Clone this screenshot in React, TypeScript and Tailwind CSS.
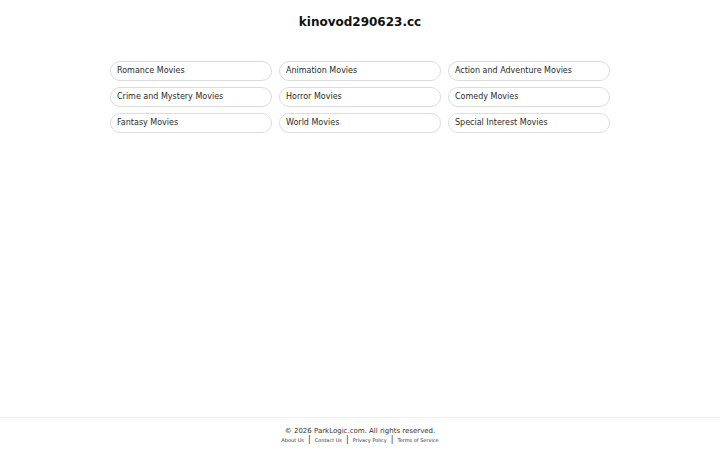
const categories = [
  "Romance Movies",
  "Animation Movies",
  "Action and Adventure Movies",
  "Crime and Mystery Movies",
  "Horror Movies",
  "Comedy Movies",
  "Fantasy Movies",
  "World Movies",
  "Special Interest Movies",
];

const links = ["About Us", "Contact Us", "Privacy Policy", "Terms of Service"];

export default function App() {
  return (
    <div className="min-h-screen flex flex-col bg-white text-[#333] font-['DejaVu_Sans',sans-serif]">
      <main className="flex-1">
        <h1 className="pt-[14px] text-center text-[12px] font-bold text-[#111] leading-[16px]">
          kinovod290623.cc
        </h1>
        <div className="mx-auto mt-[31px] w-[500px] grid grid-cols-3 gap-x-[7px] gap-y-[6px]">
          {categories.map((c) => (
            <a
              key={c}
              href="#"
              className="h-[20px] flex items-center px-[6px] rounded-full border border-[#dcdcdc] text-[8px] text-[#2a2a2a]"
            >
              {c}
            </a>
          ))}
        </div>
      </main>
      <footer className="border-t border-[#eee] pt-[8px] pb-[6px] text-center">
        <p className="text-[7px] leading-[10px] text-[#333]">© 2026 ParkLogic.com. All rights reserved.</p>
        <div className="flex justify-center items-center text-[5px] leading-[8px] text-[#333]">
          {links.map((l, i) => (
            <span key={l} className="flex items-center">
              {i > 0 && <span className="mx-[4px] text-[8px] leading-[8px]">|</span>}
              <a href="#">{l}</a>
            </span>
          ))}
        </div>
      </footer>
    </div>
  );
}
